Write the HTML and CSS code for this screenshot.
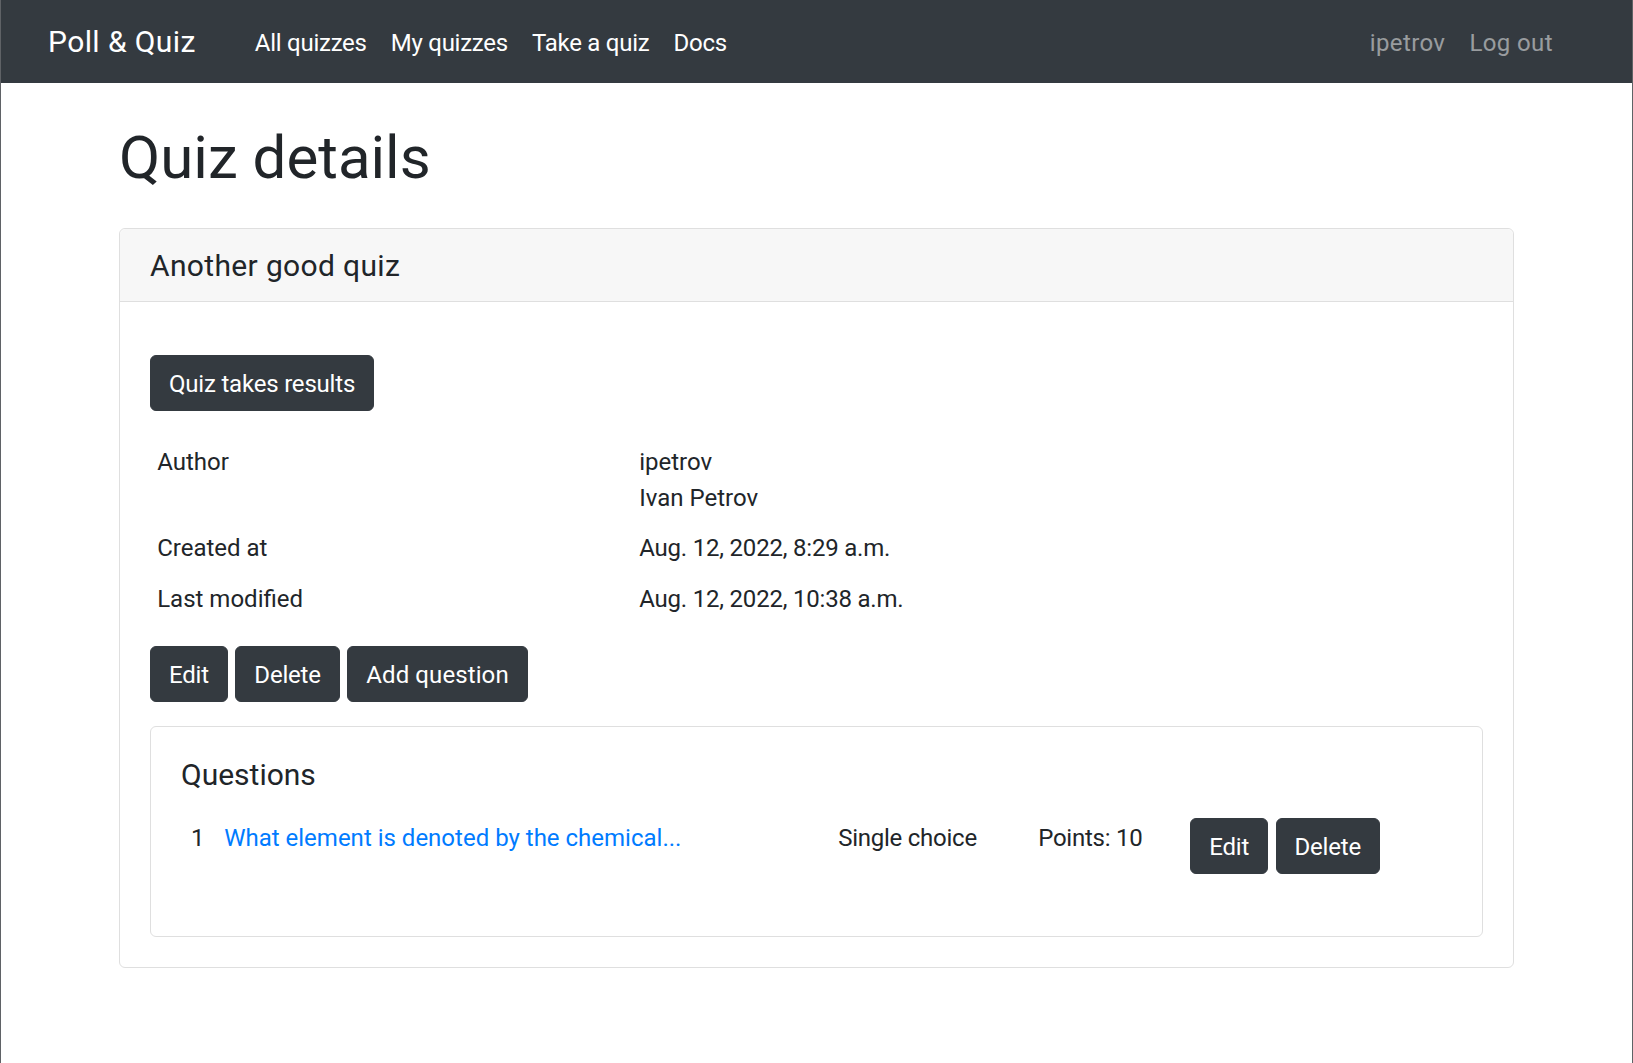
FILE: index.html
```html
<!DOCTYPE html>
<html lang="en">
<head>
<meta charset="utf-8">
<title>Quiz details</title>
<link rel="stylesheet" href="styles.css">
</head>
<body>
<nav class="navbar">
  <a class="brand" href="#">Poll &amp; Quiz</a>
  <ul class="nav">
    <li><a class="nav-link" href="#">All quizzes</a></li>
    <li><a class="nav-link" href="#">My quizzes</a></li>
    <li><a class="nav-link" href="#">Take a quiz</a></li>
    <li><a class="nav-link" href="#">Docs</a></li>
  </ul>
  <ul class="nav nav-right">
    <li><a class="nav-link muted" href="#">ipetrov</a></li>
    <li><a class="nav-link muted" href="#">Log out</a></li>
  </ul>
</nav>
<main class="container">
  <h1 class="page-title">Quiz details</h1>
  <section class="card">
    <div class="card-header"><h5 class="card-title-lg">Another good quiz</h5></div>
    <div class="card-body">
      <div class="top-actions"><a class="btn" href="#">Quiz takes results</a></div>
      <table class="info-table">
        <colgroup><col class="info-label-col"><col></colgroup>
        <tr><td>Author</td><td>ipetrov<br>Ivan Petrov</td></tr>
        <tr><td>Created at</td><td class="date">Aug. 12, 2022, 8:29 a.m.</td></tr>
        <tr><td>Last modified</td><td class="date">Aug. 12, 2022, 10:38 a.m.</td></tr>
      </table>
      <div class="btn-row">
        <a class="btn" href="#">Edit</a>
        <a class="btn" href="#">Delete</a>
        <a class="btn btn-wide" href="#">Add question</a>
      </div>
      <section class="card inner-card">
        <h5 class="card-title">Questions</h5>
        <table class="q-table">
          <colgroup>
            <col class="q-num"><col class="q-text"><col class="q-type"><col class="q-points"><col>
          </colgroup>
          <tr>
            <td class="num">1</td>
            <td><a class="link" href="#">What element is denoted by the chemical...</a></td>
            <td class="tight-text">Single choice</td>
            <td class="tight-text">Points: 10</td>
            <td><div class="btn-row"><a class="btn" href="#">Edit</a><a class="btn" href="#">Delete</a></div></td>
          </tr>
        </table>
      </section>
    </div>
  </section>
</main>
</body>
</html>
```
FILE: styles.css
```css
* { box-sizing: border-box; }
html, body { margin: 0; padding: 0; }
body {
  font-family: Roboto, "Liberation Sans", sans-serif;
  font-size: 24px;
  line-height: 36px;
  color: #212529;
  background: #fff;
  border-left: 1px solid #5f6266;
  border-right: 1px solid #5f6266;
  min-height: 1063px;
}
a { text-decoration: none; }

.navbar {
  display: flex;
  align-items: center;
  height: 83px;
  background: #343a40;
  padding: 0 67px 0 47px;
}
.brand {
  color: #fff;
  font-size: 30px;
  line-height: 45px;
  letter-spacing: 0.4px;
  margin-right: 47px;
}
.nav {
  display: flex;
  list-style: none;
  margin: 0;
  padding: 0;
}
.nav-right { margin-left: auto; }
.nav-link {
  display: block;
  padding: 13px 12px 11px;
  color: #fff;
  letter-spacing: -0.25px;
}
.nav-link.muted { color: rgba(255,255,255,0.5); letter-spacing: 0.4px; }

.container {
  width: 1395px;
  margin: 0 auto;
}
.page-title {
  font-size: 60px;
  line-height: 72px;
  font-weight: 400;
  margin: 39px 0 0;
}
.card {
  border: 1px solid #dfdfdf;
  border-radius: 6px;
  margin-top: 34px;
  background: #fff;
}
.card-header {
  background: #f7f7f7;
  border-bottom: 1px solid #dfdfdf;
  padding: 19px 30px 17px;
  border-radius: 6px 6px 0 0;
}
.card-title-lg, .card-title {
  margin: 0;
  font-size: 30px;
  line-height: 36px;
  font-weight: 400;
}
.card-title-lg { letter-spacing: 0.35px; }
.card-title { margin-bottom: 18px; padding-top: 2px; margin-top: -2px; }
.card-body { padding: 30px; }

.top-actions { margin-top: 23px; margin-bottom: 24px; display: flex; }
.btn {
  display: inline-block;
  font-size: 24px;
  line-height: 36px;
  padding: 10px 18px 8px;
  border: 1px solid #343a40;
  background: #343a40;
  color: #fff;
  border-radius: 6px;
  letter-spacing: -0.2px;
}
.btn-wide { letter-spacing: 0.1px; }
.btn-row { display: flex; gap: 7.5px; }

.info-table, .q-table {
  width: 100%;
  border-collapse: collapse;
  margin-bottom: 24px;
}
.info-table td, .q-table td {
  padding: 9px 7.2px 5.4px;
  vertical-align: top;
}
.q-table td:last-child { padding-top: 7.2px; padding-bottom: 7.2px; }
.info-label-col { width: 482px; }
.date { letter-spacing: -0.2px; }
.tight-text { letter-spacing: -0.25px; }

.inner-card {
  margin-top: 24px;
  padding: 30px;
}
.q-num { width: 36px; }
.q-text { width: 614px; }
.q-type { width: 200px; }
.q-points { width: 152px; }
.num { padding-left: 10px !important; }
.link { color: #007bff; }
```
